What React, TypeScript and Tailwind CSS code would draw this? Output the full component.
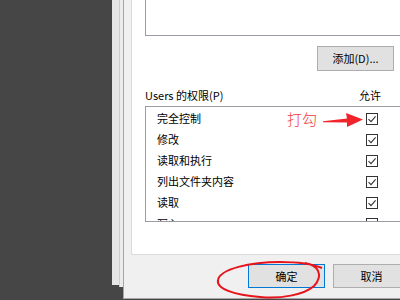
import React from 'react'

const font = { fontFamily: '"Noto Sans CJK SC", "Noto Sans", sans-serif' }

const perms = ['完全控制', '修改', '读取和执行', '列出文件夹内容', '读取', '写入']

function CheckBox() {
  return (
    <div className="flex h-[12px] w-[12px] items-center justify-center border border-[#333333] bg-white">
      <svg width="10" height="10" viewBox="0 0 10 10">
        <path d="M1.5 5.2 L4 7.6 L8.6 2.4" fill="none" stroke="#333333" strokeWidth="1.1" />
      </svg>
    </div>
  )
}

export default function App() {
  return (
    <div
      className="relative flex h-[300px] w-[400px] overflow-hidden bg-[#464646] text-[11px] text-black"
      style={font}
    >
      <div className="w-[112px] shrink-0" />

      {/* window behind the dialog */}
      <div className="flex h-[287px] w-[11px] shrink-0 items-start">
        <div className="h-[285px] w-[7px] bg-[#e7e7e7]" />
        <div className="h-[287px] w-px bg-[#cfcfcf]" />
        <div className="h-[287px] w-[3px] bg-[#ebebeb]" />
      </div>

      {/* dialog */}
      <div className="flex h-[299px] flex-1 flex-col border-b border-l border-[#a6a6a6] bg-[#f0f0f0] pl-[7px]">
        <div className="flex h-[255px] shrink-0 flex-col overflow-hidden border-b border-l border-[#dadada] bg-white">
          <div className="ml-[13px] h-[36px] w-[300px] shrink-0 border-b border-l border-[#9a9ca4]" />

          <button className="ml-[185px] mt-[10px] flex h-[25px] w-[77px] shrink-0 items-center justify-center border border-[#adadad] bg-[#e1e1e1] leading-none">
            添加(D)...
          </button>

          <div className="ml-[13px] mt-[16px] flex h-[16px] shrink-0 items-center leading-none">
            <span className="w-[214px]">Users 的权限(P)</span>
            <span>允许</span>
          </div>

          <div className="ml-[13px] mt-[3px] flex h-[116px] w-[300px] shrink-0 flex-col overflow-hidden border-b border-l border-t border-[#9a9ca4] pl-[11px] pt-[1px]">
            {perms.map((p) => (
              <div key={p} className="flex h-[21px] shrink-0 items-center leading-none">
                <span className="w-[209px]">{p}</span>
                <CheckBox />
              </div>
            ))}
          </div>
        </div>

        <div className="mt-[9px] flex">
          <button className="ml-[117px] flex h-[24px] w-[77px] shrink-0 items-center justify-center border border-[#0078d7] bg-[#e1e1e1] leading-none">
            确定
          </button>
          <button className="ml-[8px] flex h-[24px] w-[77px] shrink-0 items-center justify-center border border-[#adadad] bg-[#e1e1e1] leading-none">
            取消
          </button>
        </div>
      </div>

      {/* annotation: text + arrow */}
      <span className="absolute left-[287px] top-[111px] text-[15px] font-light leading-none text-[#f03c3c]">
        打勾
      </span>
      <svg className="absolute left-[320px] top-[110px]" width="46" height="20" viewBox="0 0 46 20">
        <polygon points="3,11.3 27,8.6 26,3 43,9.6 27,17 27,12.6 3,12.2" fill="#f0242a" />
      </svg>

      {/* annotation: hand drawn ellipse */}
      <svg className="absolute left-[210px] top-[255px]" width="120" height="45" viewBox="0 0 120 45">
        <path
          d="M95 8 C108 10 114 20 104 31 C94 40 70 44 50 42 C25 40 6 34 8 25 C10 14 40 7 70 7 C85 7 100 8 112 13"
          fill="none"
          stroke="#e8141c"
          strokeWidth="2"
        />
      </svg>
    </div>
  )
}
